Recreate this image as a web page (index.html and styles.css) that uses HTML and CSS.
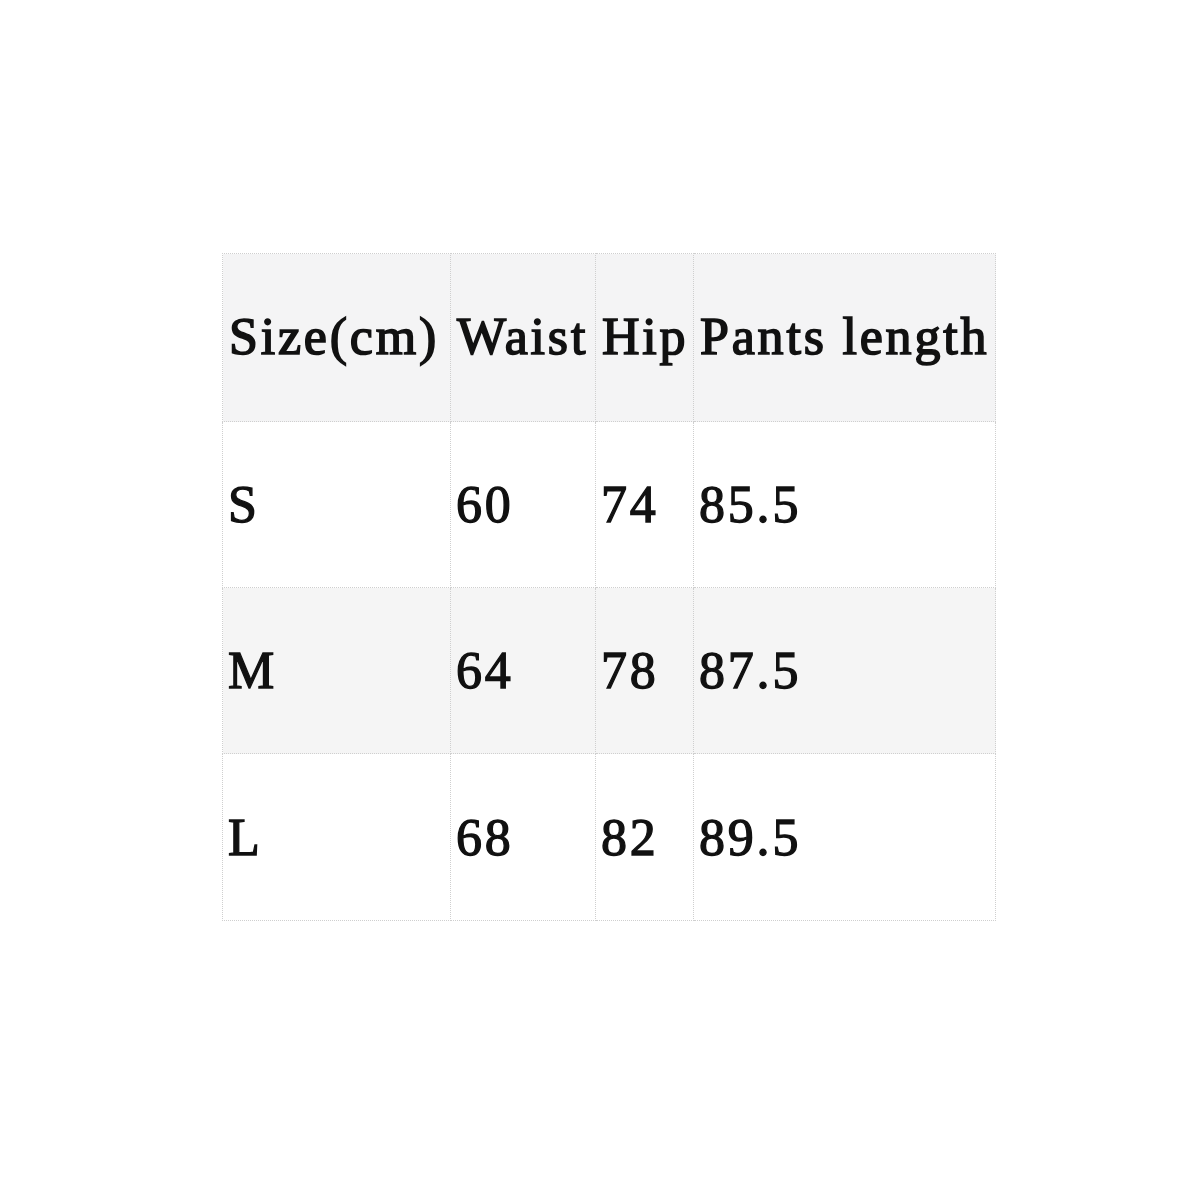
FILE: index.html
```html
<!DOCTYPE html>
<html>
<head>
<meta charset="utf-8">
<link rel="stylesheet" href="styles.css">
</head>
<body>
<div class="page">
  <table class="size-table">
    <colgroup>
      <col class="c1"><col class="c2"><col class="c3"><col class="c4">
    </colgroup>
    <tr class="head">
      <th>Size(cm)</th><th>Waist</th><th>Hip</th><th>Pants length</th>
    </tr>
    <tr class="r1">
      <td>S</td><td>60</td><td>74</td><td>85.5</td>
    </tr>
    <tr class="r2 alt">
      <td>M</td><td>64</td><td>78</td><td>87.5</td>
    </tr>
    <tr class="r3">
      <td>L</td><td>68</td><td>82</td><td>89.5</td>
    </tr>
  </table>
</div>
</body>
</html>
```
FILE: styles.css
```css
html, body {
  margin: 0;
  padding: 0;
  background: #ffffff;
}
.page {
  padding: 253px 0 0 222px;
}
.size-table {
  border-collapse: collapse;
  table-layout: fixed;
  width: 773px;
  font-family: "Liberation Serif", "Times New Roman", serif;
  font-size: 52px;
  letter-spacing: 2.8px;
  color: #111111;
  -webkit-text-stroke: 1.3px #111111;
}
.c1 { width: 228px; }
.c2 { width: 145px; }
.c3 { width: 98px; }
.c4 { width: 302px; }
.size-table th,
.size-table td {
  border: 1px dotted #cfcfcf;
  text-align: left;
  vertical-align: middle;
  padding: 0 0 0 6px;
  white-space: nowrap;
  overflow: visible;
  font-weight: normal;
}
.size-table th {
  -webkit-text-stroke: 1.6px #111111;
  padding-bottom: 3px;
}
.size-table td {
  padding-left: 5px;
}
.head { background: #f4f4f5; height: 168px; }
.r1 { height: 166px; }
.r2 { height: 166px; }
.r3 { height: 167px; }
.alt { background: #f5f5f5; }
```
